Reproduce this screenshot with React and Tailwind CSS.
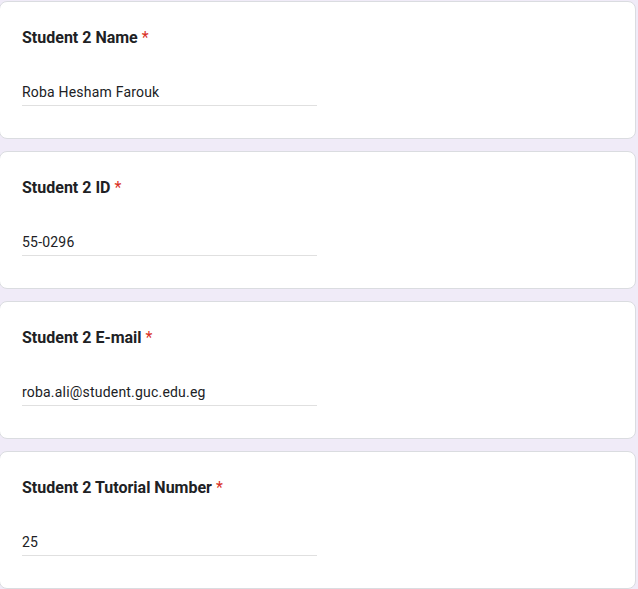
const FIELDS = [
  { label: 'Student 2 Name', value: 'Roba Hesham Farouk' },
  { label: 'Student 2 ID', value: '55-0296' },
  { label: 'Student 2 E-mail', value: 'roba.ali@student.guc.edu.eg' },
  { label: 'Student 2 Tutorial Number', value: '25' },
];

function QuestionCard({ label, value }) {
  return (
    <div className="h-[138px] w-[637px] -ml-px bg-white border border-[#dadce0] rounded-lg pt-[24px] pl-[22px]">
      <div className="text-[16px] leading-[24px] font-bold text-[#202124]">
        {label}
        <span className="text-[#d93025] font-normal ml-[4px]">*</span>
      </div>
      <div className="mt-[32px] w-[295px] border-b border-[#e0e0e0] pb-[3px] text-[14px] leading-[20px] tracking-[0.2px] text-[#202124]">
        {value}
      </div>
    </div>
  );
}

export default function App() {
  return (
    <div
      className="w-[638px] h-[589px] bg-[#f0ebf8] pt-[1px] flex flex-col gap-3 overflow-hidden"
      style={{ fontFamily: 'Roboto, Arial, sans-serif' }}
    >
      {FIELDS.map((f) => (
        <QuestionCard key={f.label} {...f} />
      ))}
    </div>
  );
}
